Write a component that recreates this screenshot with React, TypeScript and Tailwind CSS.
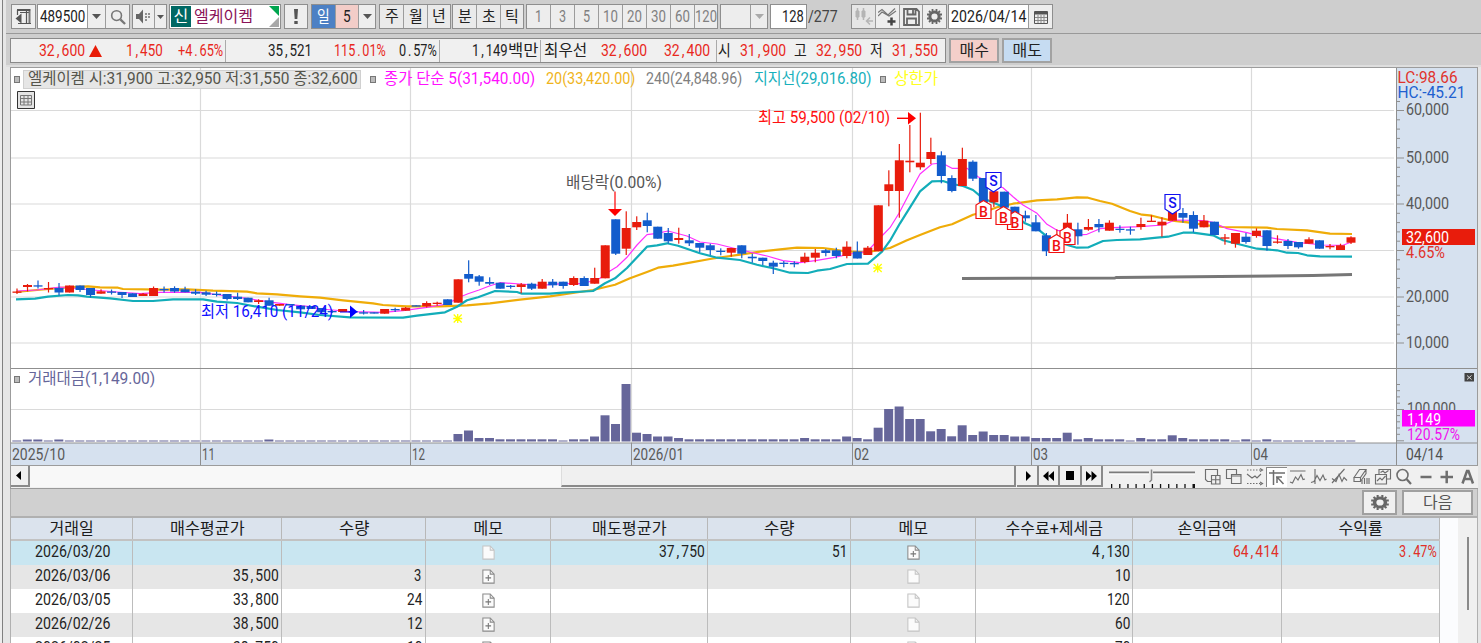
import { useLayoutEffect, useRef, useState, type ReactNode } from "react";

/* ---------- text fitted to a column width ---------- */

function T({ w, children, mono = false, className = "" }: { w: number; children: string; mono?: boolean; className?: string }) {
  const ref = useRef<HTMLSpanElement>(null);
  const [scale, setScale] = useState(1);
  useLayoutEffect(() => {
    const el = ref.current;
    if (el && el.offsetWidth) setScale(w / el.offsetWidth);
  }, [w, children]);
  return (
    <span className={`inline-flex shrink-0 items-center whitespace-pre leading-none ${className}`} style={{ width: w }}>
      <span ref={ref} className="inline-block shrink-0 origin-left" style={{ transform: `scaleX(${scale})` }}>
        {mono
          ? children.split(/([,.])/).map((p, i) =>
              p === "," || p === "." ? (
                <span key={i} className="px-[2.5px]">
                  {p}
                </span>
              ) : (
                p
              ),
            )
          : children}
      </span>
    </span>
  );
}

/* ---------- toolbar ---------- */

function Group({ children, className = "" }: { children: ReactNode; className?: string }) {
  return <div className={`flex h-[25px] shrink-0 border border-[#8e8e8e] bg-[#8e8e8e] ${className}`}>{children}</div>;
}

function Seg({ children, className = "" }: { children?: ReactNode; className?: string }) {
  return (
    <div className={`flex h-full shrink-0 items-center justify-center border-r border-[#9c9c9c] last:border-r-0 ${className}`}>{children}</div>
  );
}

const Caret = ({ className = "text-[#555]" }: { className?: string }) => (
  <svg width="9" height="5" viewBox="0 0 9 5" className={className}>
    <path d="M0 0h9L4.5 5z" fill="currentColor" />
  </svg>
);

const Gear = ({ w = 17 }: { w?: number }) => (
  <svg width={w} height="17" viewBox="0 0 17 17" preserveAspectRatio="none" fill="none" stroke="#666">
    <circle cx="8.5" cy="8.5" r="4.6" strokeWidth="3" />
    <path
      d="M6.5 1v2.5M10.5 1v2.5M6.5 13.5V16M10.5 13.5V16M1 6.5h2.5M1 10.5h2.5M13.500 6.500H16M13.500 10.500H16M3 3l1.500 1.500M14 3l-1.500 1.500M3 14l1.500-1.500M14 14l-1.500-1.500"
      strokeWidth="1.800"
    />
  </svg>
);

const Lens = ({ s = 17 }: { s?: number }) => (
  <svg width={s} height={s} viewBox="0 0 17 17" fill="none" stroke="#777">
    <circle cx="7" cy="7" r="5.200" strokeWidth="1.700" />
    <path d="M11 11l5 5" strokeWidth="2.400" />
  </svg>
);

function Toolbar() {
  const min = ["1", "3", "5", "10", "20", "30", "60", "120"];
  return (
    <div className="flex h-[33px] shrink-0 items-start bg-[#cecece] pl-[5px] pt-1 text-[17px] text-[#222]">
      <Group className="w-[25px]">
        <Seg className="w-[23px] bg-[#eee]">
          <svg width="17" height="17" viewBox="0 0 17 17" fill="none" stroke="#555">
            <path d="M2 2h13.500" strokeWidth="2" />
            <path d="M2.500 2v5M11.500 3v12M3 15.500h13M5 4.500h10" strokeWidth="1.200" />
            <path d="M14.500 3v12" stroke="#777" strokeWidth="2" />
            <path d="M.500 10.500l6-5v10z" fill="#555" stroke="none" />
          </svg>
        </Seg>
      </Group>
      <Group className="ml-px w-[93px]">
        <Seg className="w-[50px] bg-white">
          <T w={45}>489500</T>
        </Seg>
        <Seg className="w-[18px] bg-[#eee]">
          <Caret />
        </Seg>
        <Seg className="w-[23px] bg-[#eee]">
          <Lens s={16} />
        </Seg>
      </Group>
      <Group className="ml-[2px] w-[35px]">
        <Seg className="w-[22px] bg-[#eee]">
          <svg width="17" height="15" viewBox="0 0 17 15" fill="#666">
            <path d="M1 5h3l4-4.500v14L4 10H1z" />
            <path d="M10 4h2v2h-2zM13 4h2v2h-2zM10 7h2v2h-2zM13 7h2v2h-2zM10 10h2v2h-2z" opacity=".7" />
          </svg>
        </Seg>
        <Seg className="w-[11px] bg-[#eee]">
          <svg width="7" height="4" viewBox="0 0 7 4">
            <path d="M0 0h7L3.500 4z" fill="#555" />
          </svg>
        </Seg>
      </Group>
      <Group className="ml-[2px] w-[112px]">
        <div className="flex w-full items-center bg-white">
          <div className="ml-px flex h-[21px] w-5 items-center justify-center bg-[#006864] text-[16px] text-white">
            <T w={15}>신</T>
          </div>
          <T w={59} className="ml-[3px] text-[16px] text-[#8a1358]">
            엘케이켐
          </T>
          <svg width="11" height="21" viewBox="0 0 11 21" className="ml-auto mr-px">
            <path d="M1 0h10v10z" fill="#00a54f" />
            <path d="M11 11v10H1z" fill="#a8a8a8" />
          </svg>
        </div>
      </Group>
      <Group className="ml-[3px] w-[24px]">
        <Seg className="w-[22px] bg-[#eee]">
          <svg width="4" height="15" viewBox="0 0 4 15" fill="#555">
            <path d="M0 0h4l-.7 10H.7zM.300 12h3.400v3H.300z" />
          </svg>
        </Seg>
      </Group>
      <Group className="ml-[3px] w-[65px] text-[16px]">
        <Seg className="w-[24px] bg-[#4c80c4] text-white">
          <T w={13}>일</T>
        </Seg>
        <Seg className="w-[23px] bg-[#f3cdc8] text-[17px]">
          <T w={8}>5</T>
        </Seg>
        <Seg className="w-[16px] bg-[#eee]">
          <Caret />
        </Seg>
      </Group>
      <Group className="ml-[3px] w-[72px] text-[16px]">
        {["주", "월", "년"].map((t) => (
          <Seg key={t} className="w-[24px] bg-[#eaeaea] last:w-[22px]">
            <T w={14}>{t}</T>
          </Seg>
        ))}
      </Group>
      <Group className="ml-px w-[72px] text-[16px]">
        {["분", "초", "틱"].map((t) => (
          <Seg key={t} className="w-[24px] bg-[#eaeaea] last:w-[22px]">
            <T w={14}>{t}</T>
          </Seg>
        ))}
      </Group>
      <Group className="ml-[2px] w-[192px] text-[#808080]">
        {min.map((t) => (
          <Seg key={t} className="w-[24px] bg-[#ededed] last:w-[22px]">
            <T w={t.length * 7.400}>{t}</T>
          </Seg>
        ))}
      </Group>
      <Group className="ml-[2px] w-[48px]">
        <Seg className="w-[30px] bg-[#ededed]" />
        <Seg className="w-[16px] bg-[#ededed]">
          <Caret className="text-[#aaa]" />
        </Seg>
      </Group>
      <Group className="ml-[2px] w-[37px]">
        <div className="flex w-full items-center justify-end bg-white pr-[2px]">
          <T w={22}>128</T>
        </div>
      </Group>
      <div className="ml-px flex h-[25px] items-center text-[#444]">
        <T w={30}>/277</T>
      </div>
      <Group className="ml-[13px] w-[96px]">
        <Seg className="w-[24px] bg-[#e6e6e6]">
          <svg width="19" height="17" viewBox="0 0 19 17" fill="#b5b5b5" stroke="#b5b5b5">
            <path d="M2 3h3v6H2zM8 3h3v6H8z" />
            <path d="M3.500 0v12M9.500 0v12M13 13h6M16 9.500L12.500 13l3.500 3.500" fill="none" strokeWidth="1.500" />
          </svg>
        </Seg>
        <Seg className="w-[24px] bg-[#eee]">
          <svg width="19" height="18" viewBox="0 0 19 18" fill="none" stroke="#777" strokeWidth="1.200">
            <path d="M0 4.500l4-3 6 5.500 7-6.500M0 8l4-4 7 4 7-5" />
            <path d="M9.500 13.500h8M13.500 9.500v8" stroke="#444" strokeWidth="2.500" />
          </svg>
        </Seg>
        <Seg className="w-[23px] bg-[#eee]">
          <svg width="17" height="18" viewBox="0 0 17 18" fill="none" stroke="#666" strokeWidth="1.800">
            <path d="M1 1h12.500L16 3.500V17H1zM4.500 1v5.500h8V1M4 17v-6.500h9V17" />
            <path d="M10 2v4" />
          </svg>
        </Seg>
        <Seg className="w-[23px] bg-[#eee]">
          <Gear />
        </Seg>
      </Group>
      <Group className="ml-px w-[105px]">
        <Seg className="w-[80px] bg-white">
          <T w={75}>2026/04/14</T>
        </Seg>
        <Seg className="w-[23px] bg-[#eee]">
          <svg width="14" height="14" viewBox="0 0 14 14" fill="none" stroke="#555">
            <path d="M.500 1.500h13v12H.500z" />
            <path d="M1 3h12" strokeWidth="3" />
            <path d="M4 5v8M7 5v8M10 5v8M1 7.500h12M1 10.500h12" stroke="#888" />
          </svg>
        </Seg>
      </Group>
    </div>
  );
}

/* ---------- quote strip ---------- */

function Quote() {
  const sep = "h-[22px] w-px shrink-0 bg-[#aaa]";
  return (
    <div className="flex h-[31px] shrink-0 items-start bg-[#cecece] pl-1 pt-[4px] text-[17px] text-[#222]">
      <div className="flex h-[25px] w-[936px] items-center border border-[#8a8a8a] bg-[#f0f0f0] text-[#e8281c]">
        <T w={46} mono className="ml-[28px]">32,600</T>
        <svg width="13" height="12" viewBox="0 0 13 12" className="ml-1 shrink-0">
          <path d="M6.500 0L13 12H0z" fill="#e81c08" />
        </svg>
        <T w={37} mono className="ml-[24px]">1,450</T>
        <T w={45} mono className="ml-[15px]">+4.65%</T>
        <div className={`${sep} ml-[2px]`} />
        <T w={44} mono className="ml-[42px] text-[#222]">35,521</T>
        <T w={52} mono className="ml-[22px]">115.01%</T>
        <T w={38} mono className="ml-[13px] text-[#222]">0.57%</T>
        <div className={`${sep} ml-[2px]`} />
        <T w={36} mono className="ml-[32px] text-[#222]">1,149</T>
        <T w={30} className="text-[16px] text-[#222]">백만</T>
        <div className={`${sep} ml-[2px]`} />
        <T w={43} className="ml-[3px] text-[16px] text-[#222]">최우선</T>
        <T w={46} mono className="ml-[14px]">32,600</T>
        <T w={46} mono className="ml-[17px]">32,400</T>
        <div className={`${sep} ml-[6px]`} />
        <T w={13} className="ml-px text-[16px] text-[#222]">시</T>
        <T w={46} mono className="ml-[9px]">31,900</T>
        <T w={13} className="ml-[8px] text-[16px] text-[#222]">고</T>
        <T w={46} mono className="ml-[9px]">32,950</T>
        <T w={13} className="ml-[8px] text-[16px] text-[#222]">저</T>
        <T w={46} mono className="ml-[9px]">31,550</T>
      </div>
      <div className="ml-[3px] flex h-[25px] w-[50px] items-center justify-center border-2 border-[#a2a2a2] bg-[#f4cfca] text-[16px]">
        <T w={29}>매수</T>
      </div>
      <div className="ml-[3px] flex h-[25px] w-[50px] items-center justify-center border-2 border-[#a2a2a2] bg-[#c6dcf2] text-[16px]">
        <T w={29}>매도</T>
      </div>
    </div>
  );
}

/* ---------- chart ---------- */

// colour, body top, body bottom, wick top, wick bottom
type Candle = [string, number, number, number, number];
const CANDLES: Candle[] = [
  ["r", 291.5, 292.5, 288.5, 294], ["r", 285, 287, 284, 291.5], ["b", 285.3, 286.3, 280.5, 288.5], ["r", 288, 289, 282, 292.5],
  ["b", 288, 292.5, 283, 295.5], ["r", 285.5, 292.5, 285.5, 292.5], ["b", 285.5, 290, 285.5, 292], ["b", 288, 295, 288, 297.5],
  ["r", 291.3, 293.7, 289.3, 293.7], ["b", 291.5, 292.5, 289.5, 294.5], ["b", 292, 295, 292, 298], ["b", 293.3, 297, 293.3, 297],
  ["r", 293.7, 296, 293, 296], ["r", 288, 296, 286.5, 296], ["b", 289, 290, 286.5, 292.5], ["b", 288, 291.5, 286.3, 292.7],
  ["b", 289.3, 292.3, 286.7, 292.3], ["b", 291.7, 293.7, 289.3, 295], ["b", 292.3, 294.7, 290.7, 296], ["b", 293.7, 294.7, 291.5, 296.5],
  ["b", 294, 299, 294, 300.5], ["b", 296.7, 299, 292.7, 300], ["b", 297.7, 302.3, 297.7, 302.3], ["r", 300.3, 302, 299.3, 304],
  ["b", 300.3, 305.7, 297.7, 305.7], ["r", 304, 305.7, 304, 305.7], ["b", 304, 305.5, 304, 305.5], ["b", 305.7, 309.3, 305.7, 309.3],
  ["b", 306, 309, 306, 309], ["b", 308, 312.3, 308, 313.3], ["b", 311, 312.3, 310, 313], ["r", 309, 312, 309, 312],
  ["b", 311, 312.5, 311, 312.5], ["b", 312.3, 313.5, 310, 314.5], ["b", 312.3, 313.5, 312.3, 313.5], ["r", 309, 313.7, 309, 313.7],
  ["b", 309, 310, 307.7, 312], ["r", 307.7, 310.7, 307, 310.7], ["b", 305.3, 306.3, 305.3, 306.3], ["r", 303, 306.3, 301.3, 307.5],
  ["r", 302.7, 303.7, 301.7, 305.7], ["b", 299.3, 305, 299.3, 305], ["r", 279.3, 302.7, 279.3, 302.7], ["b", 274, 278.7, 260.3, 282.3],
  ["b", 276.3, 281.7, 275, 285.7], ["b", 282, 283.7, 277.3, 285], ["b", 282.7, 288.7, 282.7, 288.7], ["b", 285.7, 286.7, 285, 288.7],
  ["r", 284.3, 287, 283, 293.3], ["b", 283.7, 288.7, 282.7, 290], ["r", 281.7, 288.7, 279, 288.7], ["b", 281.7, 285.3, 279, 287.7],
  ["b", 281.7, 286, 281.7, 288.7], ["r", 278, 285, 276.3, 286], ["b", 278, 286, 276.3, 286], ["r", 278, 283.7, 267.7, 283.7],
  ["r", 245.3, 278.3, 245.3, 278.3], ["b", 219.3, 253.7, 219.3, 255], ["r", 228, 248.7, 211.3, 255], ["r", 222, 227.3, 216.3, 230],
  ["b", 220.3, 226, 212.7, 232.3], ["b", 226.7, 238.7, 226.7, 238.7], ["b", 233, 241.3, 228, 243.7], ["r", 238, 240, 227.7, 243.7],
  ["b", 240.3, 243.3, 234, 246], ["b", 243, 247.7, 243, 252.3], ["b", 245.3, 250, 243.7, 255], ["b", 250.7, 252, 248.3, 255.3],
  ["r", 248, 252.7, 248, 256.7], ["b", 245.3, 253.7, 245.3, 258.3], ["b", 256.7, 258.3, 253.7, 262.7], ["b", 257.7, 261, 257.7, 265],
  ["b", 262.7, 266.7, 260.7, 274], ["b", 262.7, 263.7, 261, 267.3], ["b", 263, 264, 261.3, 267.3], ["r", 256.7, 262, 252.7, 263.3],
  ["r", 252.7, 257.7, 249, 262.3], ["b", 250.3, 253, 249, 256.3], ["b", 250.3, 256, 247.7, 258.3], ["r", 246.7, 256, 241.3, 258.3],
  ["b", 251.5, 258.5, 241.5, 258.5], ["r", 247.7, 255, 246, 255], ["r", 205.3, 251.3, 205.3, 251.3], ["r", 184.3, 191, 170.3, 206.3],
  ["r", 160.3, 191, 144, 217.7], ["r", 160.7, 162.3, 125, 172.3], ["r", 162.7, 167.3, 112.7, 169.7], ["r", 152, 159, 137.7, 164],
  ["b", 155.3, 176, 151.3, 183.3], ["b", 178, 191, 175.3, 192.3], ["r", 159, 186, 147.7, 186], ["b", 161.7, 178.7, 160.3, 181],
  ["b", 178, 202.7, 178, 202.7], ["r", 191.3, 202.3, 191.3, 207], ["b", 191.7, 207.7, 191.7, 207.7], ["b", 206.7, 215, 206.7, 215],
  ["b", 215.3, 218.3, 210.7, 221.7], ["b", 222.3, 231.3, 215, 231.3], ["b", 235.3, 251.3, 233, 256], ["r", 238, 244, 229.3, 244],
  ["r", 222.7, 233, 214, 233], ["b", 229.3, 236.3, 222.7, 244.7], ["r", 227, 229.7, 219, 230.7], ["b", 224, 227.3, 219, 232.3],
  ["r", 222.7, 230.7, 220.3, 230.7], ["b", 228.7, 229.7, 225.3, 232.7], ["b", 229.3, 230.3, 226.7, 234.7], ["r", 224, 227, 217.7, 229.7],
  ["r", 220.7, 222, 215.3, 222], ["r", 221.7, 225.3, 217.3, 236.7], ["r", 211.7, 220.7, 211.7, 220.7], ["b", 213, 217.7, 208, 222.7],
  ["b", 215, 228.7, 211.3, 232.3], ["r", 220.7, 227.3, 215, 227.3], ["b", 221.7, 235, 221.7, 235], ["r", 237.3, 238.7, 234, 244.7],
  ["r", 233, 243.7, 233, 247.7], ["b", 236.7, 242, 233, 243.7], ["r", 230.7, 236, 228.3, 237.7], ["b", 230.3, 246, 230.3, 250.7],
  ["r", 241.5, 242.5, 235.3, 243.7], ["b", 241, 246, 239, 249], ["b", 242, 247.3, 242, 248.7], ["r", 239.3, 243.7, 237.3, 243.7],
  ["b", 240.3, 248.7, 240.3, 248.7], ["r", 246, 247.3, 244, 249.3], ["r", 245.3, 250, 243.7, 250], ["r", 237.3, 242.7, 236.3, 244],
];

const MA5 =
  "17,291 37,290 60,287 93,290 117,292 140,293.700 160,292.300 200,292.300 227,296 247,298.300 267,301.700 290,304.700 310,306.700 320,309 333,310 350,311.700 383,312.300 403,310.700 427,307.300 447,304 460,297 468,293.700 479,290 490,285.700 500,282.700 520,284 540,285.300 563,283.700 583,283.700 600,278.300 610,271 617,266.700 627,257.300 637,245 647,234.700 657,233.300 668,231 687,236 700,242 717,244 733,248 750,252 767,256 783,260.700 800,262.700 817,260.300 833,257.700 853,253.500 867,251.700 878,240 890,227.700 899,213.300 910,192.300 920,174 932,164 942,163 952,168.300 967,168.300 978,176.700 990,183.300 1003,187.700 1013,196.700 1023,205 1037,213.300 1047,224.300 1057,230.300 1068,231.700 1078,235 1087,234.300 1100,228.700 1113,227.700 1140,226.700 1163,225 1175,220 1203,220.700 1213,222.300 1227,228.700 1247,232.700 1260,236 1280,239.300 1297,242.300 1323,245 1343,245.300 1352,241.700";
const MA20 =
  "16,292 37,290 67,287.300 88,286.300 100,287.300 118,287.700 123,289 160,289.700 187,289.300 213,290.700 247,291.700 257,293.300 277,294.300 300,296.300 320,297.700 343,300.300 373,303.300 383,305 407,306.300 440,306.300 467,305.300 490,303.300 520,299.700 550,296.300 573,293 593,290 615,284.700 630,278.300 647,272 658,267.700 673,265.700 690,262.700 710,259 723,257 740,254.700 760,251.700 780,249.300 797,247.700 823,248 833,249.300 843,251 865,252.300 880,250 890,248 907,240.300 920,235 940,227.300 952,224.300 973,214.700 987,211 997,207.300 1013,203.700 1037,200.300 1057,199.300 1077,197.300 1088,197.700 1100,201 1112,203.700 1130,211 1142,214.700 1152,215.700 1170,220.300 1190,222.700 1207,225.300 1223,227 1267,227.700 1277,229 1307,230.300 1330,233.700 1352,234";
const SUPPORT =
  "16,299.300 35,298.700 48,296.700 68,295 78,295.300 87,296.700 110,298.300 133,301 153,301 173,299.300 203,299.300 217,301.700 237,303 257,306.700 277,310 300,312.300 320,315 350,317.300 403,317.700 417,315.700 445,312.300 457,306.700 467,300.300 478,297.300 495,291 517,292 522,293.700 550,293.700 563,292.700 593,291 605,283.300 615,278.300 627,268 647,246.700 657,245.300 667,243.300 678,245.700 700,253.300 717,257.700 740,260 757,264.700 773,268.300 790,272.700 808,273 817,270.700 830,269 847,264 868,263.700 882,251.700 890,240.700 900,223.300 910,207.300 920,191.300 932,181.300 943,181 952,184 963,186 973,190 983,198.300 1003,206.700 1013,213.300 1025,223.300 1037,228.300 1047,236.700 1057,241.700 1070,245.700 1077,247.700 1088,247.500 1103,241 1117,240 1140,239.300 1157,237.700 1168,236.700 1183,232.700 1193,232.700 1213,235.300 1223,240.300 1257,248.700 1277,250.300 1287,252.700 1298,253 1307,255.300 1320,256.300 1352,256.700";

const VOLUME: Record<number, number> = {
  1: 439.5, 2: 439.5, 4: 439.5, 24: 439.5, 42: 434, 43: 430.5, 44: 438, 45: 438, 55: 436.5, 56: 415.3, 57: 424, 58: 384, 59: 432.7, 60: 434,
  61: 436.5, 62: 436.5, 63: 438, 75: 438, 79: 436.5, 80: 438, 82: 427.7, 83: 409, 84: 406.5, 85: 419, 86: 419, 87: 431.3, 88: 429,
  89: 436.3, 90: 425.3, 91: 435, 92: 431.5, 93: 435, 94: 435, 95: 436.5, 96: 436.5, 97: 438, 98: 438, 99: 438, 100: 432.7, 102: 438,
  107: 438, 110: 435.3, 111: 438,
};
const THIN = new Set([52, 106, 116, 118, 120, 121, 122, 123, 124, 125, 126, 127]);

const volumeTop = (i: number) => VOLUME[i] ?? (i < 42 || THIN.has(i) ? 440.5 : 439.3);
const cx = (i: number) => 17 + i * 10.504;

function Label({ x, y, w, fill, size = 17, children }: { x: number; y: number; w: number; fill: string; size?: number; children: string }) {
  return (
    <text x={x} y={y} textLength={w} lengthAdjust="spacingAndGlyphs" fill={fill} fontSize={size}>
      {children}
    </text>
  );
}

function Buy({ x, y }: { x: number; y: number }) {
  return (
    <g>
      <path d={`M${x} ${y}l7.500 4.500v13.500h-15v-13.500z`} fill="#fff" stroke="#f01010" strokeWidth="1.200" />
      <text x={x} y={y + 16} textAnchor="middle" fontSize="14" fontWeight="500" fill="#f01010">
        B
      </text>
    </g>
  );
}

function Sell({ x, y }: { x: number; y: number }) {
  return (
    <g>
      <path d={`M${x - 7.500} ${y}h15v14.500l-7.500 5-7.500-5z`} fill="#fff" stroke="#1010f0" strokeWidth="1.200" />
      <text x={x} y={y + 13} textAnchor="middle" fontSize="14" fontWeight="500" fill="#1010f0">
        S
      </text>
    </g>
  );
}

const Star = ({ x, y }: { x: number; y: number }) => (
  <path
    d={`M${x - 4.500} ${y}h9M${x} ${y - 4.500}v9M${x - 4} ${y - 4}l8 8M${x + 4} ${y - 4}l-8 8`}
    stroke="#ffff00"
    strokeWidth="1.300"
  />
);

const COLOR: Record<string, string> = { r: "#e81c0c", b: "#125ccc" };

function Chart() {
  const rows = [110.5, 158, 204, 250.5, 297, 343];
  const prices = ["60,000", "50,000", "40,000", "", "20,000", "10,000"];
  const months: [number, string, number][] = [
    [200.5, "11", 13], [410.5, "12", 13], [631.5, "2026/01", 51], [852.5, "02", 15], [1031.5, "03", 15], [1251.5, "04", 15],
  ];
  const minor: number[] = [101.5];
  rows.slice(0, -1).forEach((y) => [1, 2, 3, 4].forEach((k) => minor.push(y + k * 9.3)));
  return (
    <svg width="1468" height="399" viewBox="10 67 1468 399" className="block">
      <rect x="10" y="67" width="1468" height="399" fill="#fff" />
      <rect x="1396" y="67" width="82" height="399" fill="#d6e1ef" />
      <rect x="10" y="443" width="1468" height="23" fill="#d6e1ef" />
      <g stroke="#dadada" strokeWidth="1.200">
        {rows.map((y) => (
          <path key={y} d={`M11 ${y}H1394`} />
        ))}
        <path d="M11 409.500H1394" />
        {months.map(([x]) => (
          <path key={x} d={`M${x} 68V443`} />
        ))}
      </g>
      <g stroke="#8f8f8f">
        <path d="M10 368.500H1478M10 443H1478M1396.500 67V466" />
        {months.map(([x]) => (
          <path key={x} d={`M${x} 443V466`} />
        ))}
        {rows.map((y) => (
          <path key={y} d={`M1397 ${y}h7`} />
        ))}
        {minor.map((y) => (
          <path key={y} d={`M1397 ${y}h3`} />
        ))}
        {[384.5, 390.7, 396.9, 403.2, 415.6, 421.8, 428, 434.3].map((y) => (
          <path key={y} d={`M1397 ${y}h3`} />
        ))}
        <path d="M1397 409.500h7M1397 440.800h7" />
      </g>
      <path d="M10 67.500H1478M10.500 67V466M10 465.500H1478M1477.500 67V466" stroke="#9c9c9c" />

      <g fill="#66669a">
        {CANDLES.map((_, i) => (
          <rect key={i} x={cx(i) - 4.700} y={volumeTop(i)} width="9" height={441.5 - volumeTop(i)} />
        ))}
      </g>

      <g fill="none" strokeLinejoin="round">
        <polyline points="962,278.500 1115,278 1116,277.500 1220,276.500 1313,275.500 1352,274.500" stroke="#777" strokeWidth="3" />
        <polyline points={MA20} stroke="#efac08" strokeWidth="2.200" />
        <polyline points={MA5} stroke="#ff30ff" strokeWidth="1.200" />
        <polyline points={SUPPORT} stroke="#12adb9" strokeWidth="2.200" />
      </g>

      {CANDLES.map(([c, t, b, hi, lo], i) => (
        <g key={i} fill={COLOR[c]}>
          <rect x={cx(i) - 0.600} y={hi} width="1.200" height={lo - hi} />
          <rect x={cx(i) - 4.500} y={t} width="9" height={Math.max(1.3, b - t)} />
        </g>
      ))}

      <Star x={457.700} y={318.500} />
      <Star x={877.700} y={268} />

      <Label x={566} y={187.500} w={96} fill="#555" size={16}>배당락(0.00%)</Label>
      <path d="M615 191.500V211" stroke="#ff0000" strokeWidth="1.200" />
      <path d="M608 209h14l-7 7z" fill="#ff0000" />
      <Label x={758} y={122.500} w={132} fill="#ff1010" size={16}>최고 59,500 (02/10)</Label>
      <path d="M897 118.300h14" stroke="#ff0000" strokeWidth="1.400" />
      <path d="M908 112l8 6.300-8 6.300z" fill="#ff0000" />
      <Label x={201} y={316.500} w={132} fill="#1010ff" size={16}>최저 16,410 (11/24)</Label>
      <path d="M340 312h12" stroke="#0000ff" />
      <path d="M350 305.500l7.500 6.300-7.500 6.300z" fill="#0000ff" />

      <Sell x={993.500} y={172.500} />
      <Sell x={1172.500} y={194.500} />
      <Buy x={983.500} y={200.500} />
      <Buy x={1015} y={211.500} />
      <Buy x={1003.500} y={206.500} />
      <Buy x={1067.500} y={226.500} />
      <Buy x={1056.500} y={234.500} />

      <Label x={1397.500} y={82.500} w={60} fill="#e0342c">LC:98.66</Label>
      <Label x={1397.500} y={97.500} w={68} fill="#2060d0">HC:-45.21</Label>
      {rows.map((y, i) =>
        prices[i] ? (
          <Label key={y} x={1406} y={y + 4.700} w={43} fill="#585858">
            {prices[i]}
          </Label>
        ) : null,
      )}
      <rect x="1402" y="229" width="73" height="16" fill="#e81c0c" />
      <Label x={1406} y={243} w={43} fill="#fff">32,600</Label>
      <Label x={1406} y={258} w={39} fill="#e0342c">4.65%</Label>
      <Label x={1407} y={414} w={49} fill="#585858">100,000</Label>
      <rect x="1402" y="410" width="73" height="16.500" fill="#ff00ff" />
      <Label x={1407} y={424.500} w={34} fill="#fff">1,149</Label>
      <Label x={1407} y={439.500} w={53} fill="#f010f0">120.57%</Label>
      <rect x="1464.500" y="373" width="9.500" height="8.500" fill="#444" />
      <path d="M1467 375.500l4.500 4M1471.500 375.500l-4.500 4" stroke="#ddd" />

      <Label x={12} y={459.500} w={53} fill="#5a5a5a">2025/10</Label>
      {months.map(([x, t, w]) => (
        <Label key={x} x={x + 1.500} y={459.500} w={w} fill="#5a5a5a">
          {t}
        </Label>
      ))}
      <Label x={1406} y={459.500} w={37} fill="#505050">04/14</Label>
    </svg>
  );
}

const Dot = ({ className = "" }: { className?: string }) => (
  <div className={`h-[7px] w-[6px] shrink-0 border border-[#777] bg-[#bbb] ${className}`} />
);

function ChartPanel() {
  return (
    <div className="relative h-[399px] w-[1468px] shrink-0">
      <Chart />
      <div className="absolute left-[4px] top-[2px] flex h-[20px] items-center text-[16px]">
        <Dot />
        <div className="ml-[3px] flex h-[19px] w-[338px] items-center border border-[#d0d0d0] bg-[#e6e6e6] pl-[4px] text-[#55554c]">
          <T w={330}>엘케이켐 시:31,900 고:32,950 저:31,550 종:32,600</T>
        </div>
        <Dot className="ml-[9px]" />
        <T w={151} className="ml-[8px] text-[#ff10ff]">종가 단순 5(31,540.00)</T>
        <T w={89} className="ml-[11px] text-[#efb41c]">20(33,420.00)</T>
        <T w={96} className="ml-[11px] text-[#808080]">240(24,848.96)</T>
        <T w={118} className="ml-[12px] text-[#18b0bc]">지지선(29,016.80)</T>
        <Dot className="ml-[8px]" />
        <T w={44} className="ml-[8px] text-[#ffff20]">상한가</T>
      </div>
      <svg className="absolute left-[7px] top-[24px]" width="18" height="18" viewBox="0 0 18 18" fill="none">
        <path d="M.500.500h17v17H.500z" fill="#e4e4e4" stroke="#333" />
        <path d="M3.500 4.500h11v9.500h-11zM7 4.500V14M11 4.500V14M3.500 7.500h11M3.500 11h11" stroke="#777" />
      </svg>
      <div className="absolute left-[4px] top-[303px] flex h-[18px] items-center text-[16px] text-[#66669a]">
        <Dot />
        <T w={127} className="ml-[8px]">거래대금(1,149.00)</T>
      </div>
    </div>
  );
}

/* ---------- scroll strip ---------- */

const raised = "flex h-[21px] shrink-0 items-center justify-center border-b-2 border-r-2 border-[#8a8a8a] bg-[#f0f0f0]";

const TOOLS: ReactNode[] = [
  <path key="0" d="M7 13.500H3.500L1.500 11.500V1.500h12v6M7.500 7.500h8.500v8.500H7.500zM11.700 7.500V16M7.500 11.700H16" />,
  <path key="1" d="M6 10.500H1.500V1.500h10V6M6.500 6.500h9.500v9H6.500zM6.500 8h9.500" />,
  <g key="2">
    <path d="M1 2h14M1 15.500h14" strokeDasharray="1.500 1.500" />
    <path d="M1 6l5 4 3-2 2 2 4-4" />
    <path d="M14 .500l2.500 1.500L14 3.500M14 14l2.500 1.500L14 17" />
  </g>,
  <path key="3" d="M1 4h16M5.500 1v15M8 8h6M9 8v6M9 8l6.500 7" strokeWidth="1.500" />,
  <path key="4" d="M1 3h15.500M1 14l2.500 1 3-6 2.500 3L12 6.500l2 5 2-.500" />,
  <path key="5" d="M5 1v15M1 14.500l3-1 3-6 3 5 3-5.500 2 5 1.500-1" />,
  <path key="6" d="M1 15L13.500 1M1 10.500l4 3 3-7 3 7 2-4 3 3" />,
  <g key="7">
    <path d="M1 9.500L6.500 1.500H13L7.500 9.500zM1 9.500v4h6.500v-4M7.500 13.500L13 5.500v-4" />
    <path d="M9 12v4M11.500 10v6M14 10v6M16 10v6" />
  </g>,
  <path key="8" d="M5 6V1.500h11.500V11H12M1.500 6.500h11v9.500h-11zM3 13l3-3 2 2 3.500-4M6.500 4.500L9 3l2 2 3.500-2.500" />,
  <g key="9">
    <circle cx="7.500" cy="7" r="5.500" strokeWidth="1.600" />
    <path d="M11.500 11l4.500 5" strokeWidth="2.200" />
  </g>,
  <path key="10" d="M3.500 9h11" strokeWidth="2.500" />,
  <path key="11" d="M2.500 9h12.500M8.700 2.700v12.500" strokeWidth="2.500" />,
  <path key="12" d="M3.500 15.500L8 3h1.500L14 15.500M5 11h7.500" strokeWidth="2.500" />,
];

function ScrollStrip() {
  return (
    <div className="flex h-[23px] shrink-0 items-start border-b border-l border-[#9a9a9a] bg-[#f0f0f0]">
      <div className={`${raised} w-[19px] pr-[3px]`}>
        <svg width="5" height="9" viewBox="0 0 5 9"><path d="M5 0v9L0 4.500z" /></svg>
      </div>
      <div className="h-[21px] w-[531px] shrink-0 bg-[#f8f8f8]" />
      <div className={`${raised} w-[455px] border-l border-l-[#ddd]`} />
      <div className={`${raised} ml-px w-[22px]`}>
        <svg width="5" height="10" viewBox="0 0 5 10" className="ml-[2px]"><path d="M0 0v10l5-5z" /></svg>
      </div>
      <div className={`${raised} w-[21px]`}>
        <svg width="11" height="10" viewBox="0 0 11 10"><path d="M5.500 0v10L0 5zM11 0v10L5.500 5z" /></svg>
      </div>
      <div className={`${raised} w-[22px]`}>
        <svg width="8" height="9" viewBox="0 0 8 9"><path d="M0 0h8v9H0z" /></svg>
      </div>
      <div className={`${raised} w-[21px]`}>
        <svg width="11" height="10" viewBox="0 0 11 10"><path d="M0 0v10l5.500-5zM5.500 0v10L11 5z" /></svg>
      </div>
      <svg width="88" height="22" viewBox="0 0 88 22" className="ml-[5px] shrink-0">
        <path d="M1 6.500h86" stroke="#7a7a7a" strokeWidth="2" />
        <path d="M1 8h86" stroke="#fff" />
        <path d="M41 3.500h4V14l-2.500 2-1.500-2z" fill="#eee" />
        <path d="M43.500 3.500V14l-2 2" stroke="#888" strokeWidth="1.500" fill="none" />
        {[0, 1, 2, 3, 4, 5, 6, 7, 8, 9, 10].map((k) => (
          <rect key={k} x={3 + k * 8.15} y="18" width={k === 10 ? 2.500 : 1.300} height="4" fill="#111" />
        ))}
      </svg>
      <div className="ml-[6px] flex h-[22px] items-center">
        {TOOLS.map((t, i) => (
          <div
            key={i}
            className={`flex h-[20px] w-[21.300px] items-center justify-center ${i === 3 ? "border-l border-t border-[#888] bg-white" : ""}`}
          >
            <svg width="18" height="18" viewBox="0 0 18 18" fill="none" stroke="#6e6e6e" strokeWidth="1.150">
              {t}
            </svg>
          </div>
        ))}
      </div>
    </div>
  );
}

/* ---------- trades ---------- */

const HEAD: [string, number][] = [
  ["거래일", 44], ["매수평균가", 75], ["수량", 30], ["메모", 29], ["매도평균가", 75], ["수량", 30], ["메모", 29], ["수수료+제세금", 97], ["손익금액", 59], ["수익률", 44],
];

const ROWS = [
  { date: "2026/03/20", cells: ["", "", "off", "37,750", "51", "on", "4,130", "64,414", "3.47%"] },
  { date: "2026/03/06", cells: ["35,500", "3", "on", "", "", "off", "10", "", ""] },
  { date: "2026/03/05", cells: ["33,800", "24", "on", "", "", "off", "120", "", ""] },
  { date: "2026/02/26", cells: ["38,500", "12", "on", "", "", "off", "60", "", ""] },
  { date: "2026/02/25", cells: ["38,750", "10", "on", "", "", "off", "70", "", ""] },
];

const Memo = ({ on }: { on: boolean }) => (
  <svg width="13" height="15" viewBox="0 0 15 16" preserveAspectRatio="none" fill="none" stroke={on ? "#8a8a8a" : "#c4c4c4"} strokeWidth="1.200">
    <path d="M1 1h8.500L14 5.500V15H1z" fill="#fbfbfb" />
    <path d="M9.500 1v4.500H14" />
    {on && <path d="M4 9.500h6.500M7.300 6.300v6.500" stroke="#777" />}
  </svg>
);

const GRID = "grid grid-cols-[122px_149px_144px_125px_157px_143px_125px_157px_149px_158px]";
const ROW_BG = ["bg-[#c9e6f1]", "bg-[#e6e6e6]", "bg-white", "bg-[#e6e6e6]", "bg-white"];

function Trades() {
  return (
    <div className="flex h-[127px] shrink-0 overflow-hidden border-l border-r border-t-2 border-[#b0b0b0]">
      <div className="w-[1429px] shrink-0">
        <div className={`${GRID} h-[23px] border-b-2 border-[#c2c2c2] bg-[#dbe3ed] text-[16px] text-[#1c1c1c]`}>
          {HEAD.map(([t, w], i) => (
            <div key={i} className="flex items-center justify-center border-r border-[#b8b8b8]">
              <T w={w}>{t}</T>
            </div>
          ))}
        </div>
        {ROWS.map((r, ri) => (
          <div key={r.date} className={`${GRID} h-[24px] ${ROW_BG[ri]} text-[17px] text-[#222]`}>
            <div className="flex items-center justify-center border-r border-[#bcbcbc] pb-[3px] pl-[2px]">
              <T w={75}>{r.date}</T>
            </div>
            {r.cells.map((c, i) =>
              i === 2 || i === 5 ? (
                <div key={i} className="flex items-center justify-center border-r border-[#bcbcbc] pb-[2px]">
                  <Memo on={c === "on"} />
                </div>
              ) : (
                <div
                  key={i}
                  className={`flex items-center justify-end border-r border-[#bcbcbc] pb-[3px] ${i === 1 || i === 4 ? "pr-[3px]" : "pr-[2px]"} ${i > 6 ? "text-[#e03028]" : ""}`}
                >
                  {c && (
                    <T w={c.length * 7.600} mono>
                      {c}
                    </T>
                  )}
                </div>
              ),
            )}
          </div>
        ))}
      </div>
      <div className="w-[18px] shrink-0 bg-[#fbfcfe]" />
      <div className="flex flex-1 justify-center bg-[#f0f0f0] pt-[19px]">
        <div className="h-[73px] w-[2px] bg-[#8a8a8a]" />
      </div>
    </div>
  );
}

export default function App() {
  return (
    <div className="flex h-[643px] w-[1481px] overflow-hidden bg-[#e6e6e6] font-[Roboto,'Noto_Sans_CJK_KR',sans-serif]">
      <div className="w-[2px] shrink-0 bg-[#ededed]" />
      <div className="w-px shrink-0 bg-[#808080]" />
      <div className="flex w-[1478px] shrink-0 flex-col">
        <div className="flex shrink-0 flex-col border-l-[3px] border-[#e6e6e6]">
          <Toolbar />
          <div className="h-px bg-[#999]" />
          <Quote />
          <div className="h-[2px] bg-[#dedede]" />
        </div>
        <div className="flex w-[1475px] flex-col pl-[7px]">
          <ChartPanel />
          <ScrollStrip />
          <div className="flex h-[27px] shrink-0 items-center justify-end border-l border-r border-[#b0b0b0] bg-[#d0d0d0] pr-[4px]">
            <div className="flex h-[25px] w-[35px] items-center justify-center border-2 border-[#a0a0a0] bg-[#f0f0f0]">
              <Gear w={20} />
            </div>
            <div className="ml-[5px] flex h-[25px] w-[71px] items-center justify-center border-2 border-[#a0a0a0] bg-[#f0f0f0] text-[16px] text-[#555]">
              <T w={29}>다음</T>
            </div>
          </div>
          <Trades />
        </div>
      </div>
    </div>
  );
}
